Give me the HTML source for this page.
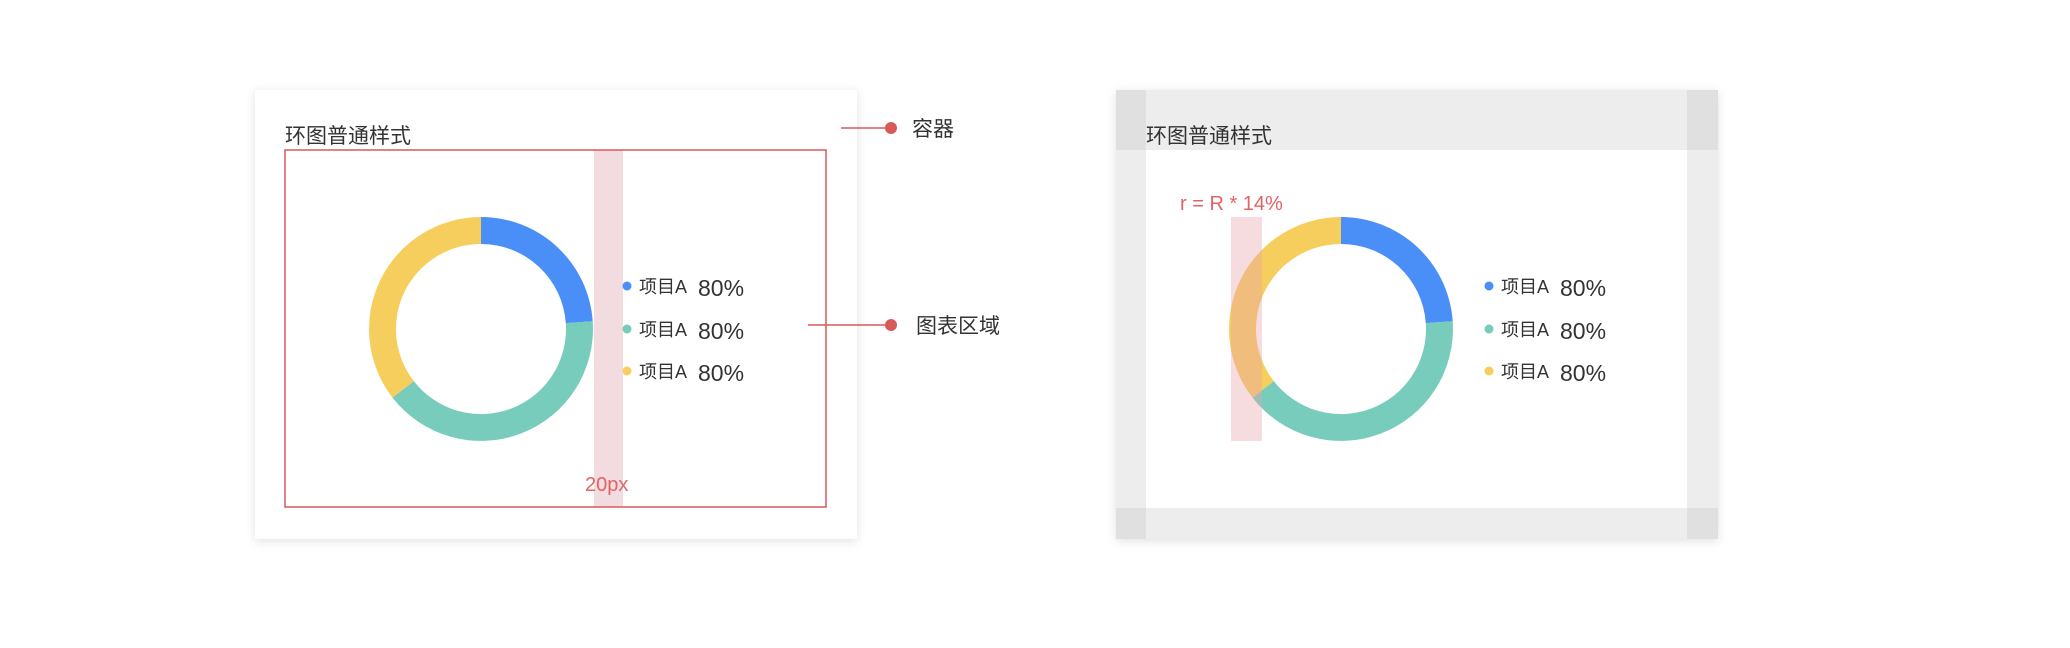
<!DOCTYPE html>
<html><head><meta charset="utf-8"><style>
html,body{margin:0;padding:0;background:#fff;width:2070px;height:648px;overflow:hidden}
svg{display:block}
text{font-family:"Liberation Sans","Noto Sans CJK SC",sans-serif}
</style></head><body>
<svg width="2070" height="648" viewBox="0 0 2070 648" xmlns="http://www.w3.org/2000/svg">
<defs>
<filter id="sh" x="-10%" y="-10%" width="120%" height="120%"><feDropShadow dx="0" dy="2" stdDeviation="5" flood-color="#000" flood-opacity="0.12"/></filter>
</defs>
<rect x="255" y="90" width="602" height="449" fill="#fff" filter="url(#sh)"/>
<text x="285" y="143" font-size="21" fill="#333">环图普通样式</text>
<rect x="594" y="150" width="29" height="357" fill="#f3dcdf"/>
<rect x="285" y="150" width="541" height="357" fill="none" stroke="#d9595b" stroke-width="1.5"/>
<text x="585" y="491" font-size="20" fill="#e06466">20px</text>
<g transform="translate(481,329)">
<path d="M0,-112 A112,112 0 0 1 111.7,-7.8 L84.8,-5.9 A85,85 0 0 0 0,-85 Z" fill="#4a8ff8"/>
<path d="M111.7,-7.8 A112,112 0 0 1 -88.5,68.6 L-67.2,52.1 A85,85 0 0 0 84.8,-5.9 Z" fill="#77ccbb"/>
<path d="M-88.5,68.6 A112,112 0 0 1 0,-112 L0,-85 A85,85 0 0 0 -67.2,52.1 Z" fill="#f6ce5d"/>
</g>
<g font-size="18" fill="#333">
<circle cx="627" cy="286" r="4.5" fill="#4a8ff8"/><text x="639" y="293">项目A</text><text x="698" y="296" font-size="23">80%</text>
<circle cx="627" cy="329" r="4.5" fill="#77ccbb"/><text x="639" y="336">项目A</text><text x="698" y="339" font-size="23">80%</text>
<circle cx="627" cy="371" r="4.5" fill="#f6ce5d"/><text x="639" y="378">项目A</text><text x="698" y="381" font-size="23">80%</text>
</g>
<line x1="841" y1="128" x2="891" y2="128" stroke="#d9595b" stroke-width="1.5"/>
<circle cx="891" cy="128" r="6" fill="#d9595b"/>
<text x="912" y="136" font-size="21" fill="#333">容器</text>
<line x1="808" y1="325" x2="891" y2="325" stroke="#d9595b" stroke-width="1.5"/>
<circle cx="891" cy="325" r="6" fill="#d9595b"/>
<text x="916" y="333" font-size="21" fill="#333">图表区域</text>
<rect x="1116" y="90" width="602" height="449" fill="#ededed" filter="url(#sh)"/>
<rect x="1146" y="150" width="541" height="358" fill="#fff"/>
<rect x="1116" y="90" width="30" height="60" fill="#e0e0e0"/>
<rect x="1687" y="90" width="31" height="60" fill="#e0e0e0"/>
<rect x="1116" y="508" width="30" height="31" fill="#e0e0e0"/>
<rect x="1687" y="508" width="31" height="31" fill="#e0e0e0"/>
<text x="1146" y="143" font-size="21" fill="#333">环图普通样式</text>
<text x="1180" y="210" font-size="20" fill="#e06466">r = R * 14%</text>
<g transform="translate(1341,329)">
<path d="M0,-112 A112,112 0 0 1 111.7,-7.8 L84.8,-5.9 A85,85 0 0 0 0,-85 Z" fill="#4a8ff8"/>
<path d="M111.7,-7.8 A112,112 0 0 1 -88.5,68.6 L-67.2,52.1 A85,85 0 0 0 84.8,-5.9 Z" fill="#77ccbb"/>
<path d="M-88.5,68.6 A112,112 0 0 1 0,-112 L0,-85 A85,85 0 0 0 -67.2,52.1 Z" fill="#f6ce5d"/>
</g>
<rect x="1231" y="217" width="31" height="224" fill="#e8a6b0" opacity="0.4"/>
<g font-size="18" fill="#333">
<circle cx="1489" cy="286" r="4.5" fill="#4a8ff8"/><text x="1501" y="293">项目A</text><text x="1560" y="296" font-size="23">80%</text>
<circle cx="1489" cy="329" r="4.5" fill="#77ccbb"/><text x="1501" y="336">项目A</text><text x="1560" y="339" font-size="23">80%</text>
<circle cx="1489" cy="371" r="4.5" fill="#f6ce5d"/><text x="1501" y="378">项目A</text><text x="1560" y="381" font-size="23">80%</text>
</g>
</svg>
</body></html>
